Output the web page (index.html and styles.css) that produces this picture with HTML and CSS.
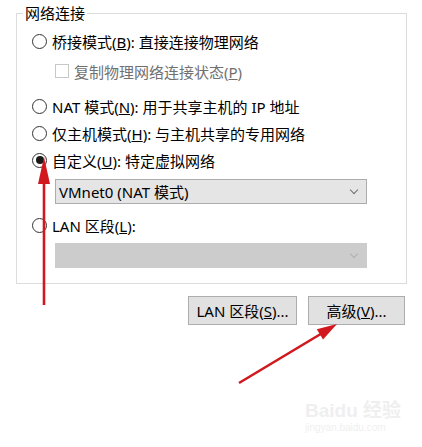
FILE: index.html
```html
<!DOCTYPE html>
<html lang="zh-CN">

<head>
    <meta charset="UTF-8">
    <title>网络连接</title>
    <link rel="stylesheet" href="styles.css">
</head>

<body>
    <fieldset class="group">
        <legend>网络连接</legend>

        <div class="row bridge">
            <span class="radio"></span>
            <span>桥接模式(<u>B</u>): 直接连接物理网络</span>
        </div>
        <div class="row sub">
            <span class="check"></span>
            <span class="muted">复制物理网络连接状态(<u>P</u>)</span>
        </div>

        <div class="row nat">
            <span class="radio"></span>
            <span>NAT 模式(<u>N</u>): 用于共享主机的 IP 地址</span>
        </div>
        <div class="row">
            <span class="radio"></span>
            <span>仅主机模式(<u>H</u>): 与主机共享的专用网络</span>
        </div>
        <div class="row">
            <span class="radio on"></span>
            <span>自定义(<u>U</u>): 特定虚拟网络</span>
        </div>
        <div class="select">
            <span>VMnet0 (NAT 模式)</span>
            <span class="chev"></span>
        </div>

        <div class="row lan">
            <span class="radio"></span>
            <span>LAN 区段(<u>L</u>):</span>
        </div>
        <div class="select off">
            <span></span>
            <span class="chev"></span>
        </div>
    </fieldset>

    <div class="buttons">
        <button class="btn lan-btn">LAN 区段(<u>S</u>)...</button>
        <button class="btn adv-btn">高级(<u>V</u>)...</button>
    </div>

    <div class="mark">
        <div class="mark-logo">Bai<span class="paw">du</span> 经验</div>
        <div class="mark-url">jingyan.baidu.com</div>
    </div>

    <svg class="arrows" width="422" height="447" viewBox="0 0 422 447">
        <line x1="44" y1="305" x2="44" y2="178" stroke="#d0181e" stroke-width="2.6" />
        <polygon points="44,157 38,184 50,184" fill="#d0181e" />
        <line x1="239" y1="383" x2="324" y2="332" stroke="#d0181e" stroke-width="2.6" />
        <polygon points="337,324 323,339.4 316.8,329.2" fill="#d0181e" />
    </svg>
</body>

</html>
```

FILE: styles.css
```css
* {
    box-sizing: border-box;
}

body {
    margin: 0;
    padding-top: 3px;
    width: 422px;
    height: 447px;
    background-color: #fff;
    color: #000;
    font-family: "Noto Sans", "Noto Sans CJK SC", sans-serif;
    font-size: 15px;
    position: relative;
    overflow: hidden;
}

.group {
    margin: 0 0 0 16px;
    width: 391px;
    border: 1px solid #dcdcdc;
    padding: 0 0 15px 15px;
}

.group legend {
    margin-left: -9px;
    padding: 0 2px;
    line-height: 20px;
}

.row {
    display: flex;
    align-items: center;
    gap: 5px;
    height: 24px;
    margin-top: 3px;
    white-space: nowrap;
}

.bridge {
    margin-top: 6px;
}

.sub {
    margin-top: 6px;
    padding-left: 23px;
}

.nat {
    margin-top: 11px;
}

.lan {
    margin-top: 9px;
}

.radio {
    width: 15px;
    height: 15px;
    border: 1px solid #333;
    border-radius: 50%;
    background-color: #fff;
    display: flex;
    align-items: center;
    justify-content: center;
    flex-shrink: 0;
}

.radio.on::after {
    content: "";
    width: 8px;
    height: 8px;
    border-radius: 50%;
    background-color: #1a1a1a;
}

.check {
    width: 14px;
    height: 14px;
    border: 1px solid #c8c8c8;
    background-color: #fff;
}

.muted {
    color: #707070;
}

.select {
    margin: 7px 0 0 23px;
    width: 312px;
    height: 25px;
    border: 1px solid #acacac;
    background-color: #e5e5e5;
    display: flex;
    align-items: center;
    justify-content: space-between;
    padding: 0 9px 0 3px;
}

.select.off {
    margin-top: 6px;
    border-color: #cccccc;
    background-color: #cccccc;
}

.chev {
    width: 6px;
    height: 6px;
    border-right: 1px solid #707070;
    border-bottom: 1px solid #707070;
    transform: rotate(45deg);
    margin-bottom: 4px;
}

.off .chev {
    border-color: #b0b0b0;
}

.buttons {
    display: flex;
    justify-content: flex-end;
    gap: 11px;
    margin-top: 12px;
    padding-right: 17px;
}

.btn {
    height: 29px;
    border: 1px solid #adadad;
    background-color: #e1e1e1;
    font-family: inherit;
    font-size: 15px;
    color: #000;
    padding: 0;
}

.lan-btn {
    width: 109px;
}

.adv-btn {
    width: 97px;
}

.mark {
    position: absolute;
    left: 305px;
    top: 400px;
    color: #efefef;
    font-family: "Liberation Sans", "Noto Sans CJK SC", sans-serif;
}

.mark-logo {
    font-size: 19px;
    font-weight: bold;
    line-height: 22px;
}

.mark-url {
    font-size: 10px;
    line-height: 12px;
}

.arrows {
    position: absolute;
    left: 0;
    top: 0;
    pointer-events: none;
}
```
